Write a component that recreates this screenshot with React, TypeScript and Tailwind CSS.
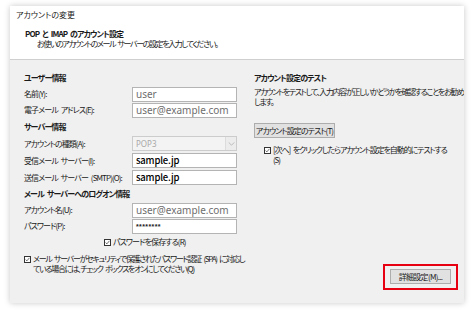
import type { ReactNode } from "react";

// Meiryo UI stand-in: CJK font with proportional kana, tightened per text
const jp = "font-['Noto_Sans_CJK_JP',sans-serif] [font-feature-settings:'palt'] [word-spacing:2px] text-[8px] text-[#1a1a1a]";

function Check() {
  return (
    <span className="flex h-[7px] w-[7px] shrink-0 items-center justify-center border border-[#333] bg-white">
      <svg viewBox="0 0 7 7" className="h-[5px] w-[5px]">
        <path d="M0.8 3.6 L2.7 5.4 L6.2 1.2" fill="none" stroke="#222" strokeWidth="0.9" />
      </svg>
    </span>
  );
}

function Heading({ children }: { children: ReactNode }) {
  return <div className={`${jp} flex h-[17px] items-center font-bold tracking-[-0.9px]`}>{children}</div>;
}

function Row({ label, h = "h-[16px]", children }: { label: string; h?: string; children: ReactNode }) {
  return (
    <div className={`flex ${h} items-center`}>
      <div className={`${jp} w-[108px] whitespace-nowrap tracking-[-0.9px]`}>{label}</div>
      {children}
    </div>
  );
}

function TextBox({ value, dark = false }: { value: string; dark?: boolean }) {
  return (
    <div className="flex h-[15px] w-[105px] items-center border border-[#b4b4b4] bg-white pl-[3px]">
      {dark ? (
        <span className="font-['Noto_Sans_CJK_JP',sans-serif] text-[9.5px] font-medium leading-none tracking-[-0.2px] text-black">{value}</span>
      ) : (
        <span className="font-['Noto_Sans',sans-serif] text-[10px] leading-none text-[#6e6e6e]">{value}</span>
      )}
    </div>
  );
}

export default function App() {
  return (
    <div className="h-[311px] w-[474px] overflow-hidden bg-white pl-[10px] pt-[6px]">
      <div className="flex h-[297px] w-[454px] flex-col overflow-hidden bg-[#f0f0f0] shadow-[0_0_6px_rgba(0,0,0,0.22)]">
        {/* header */}
        <div className="h-[54px] shrink-0 border-b border-[#cfcfcf] bg-white pl-[6px] pt-[4px]">
          <div className={`${jp} leading-[10px] tracking-[0px]`}>アカウントの変更</div>
          <div className="pl-[9px] pt-[9px]">
            <div className={`${jp} font-bold leading-[10px] tracking-[-0.9px]`}>POP と IMAP のアカウント設定</div>
            <div className={`${jp} pl-[12px] leading-[9px] tracking-[-1.4px]`}>お使いのアカウントのメール サーバーの設定を入力してください。</div>
          </div>
        </div>

        {/* body */}
        <div className="flex flex-1 pt-[9px]">
          <div className="w-[230px] shrink-0 pl-[14px]">
            <Heading>ユーザー情報</Heading>
            <Row label="名前(Y):">
              <TextBox value="user" />
            </Row>
            <Row label="電子メール アドレス(E):">
              <TextBox value="user@example.com" />
            </Row>
            <Heading>サーバー情報</Heading>
            <Row label="アカウントの種類(A):" h="h-[17px]">
              <div className="flex h-[15px] w-[105px] items-center border border-[#cccccc] bg-[#f3f3f3]">
                <span className="flex-1 pl-[3px] font-['Noto_Sans',sans-serif] text-[8px] leading-none text-[#a8a8a8]">POP3</span>
                <span className="flex h-full w-[11px] items-center justify-center border-l border-[#dcdcdc] bg-[#ececec]">
                  <svg viewBox="0 0 8 5" className="h-[4px] w-[7px]">
                    <path d="M0.5 0.5 L4 4 L7.5 0.5" fill="none" stroke="#b0b0b0" strokeWidth="1" />
                  </svg>
                </span>
              </div>
            </Row>
            <Row label="受信メール サーバー(I):" h="h-[17px]">
              <TextBox value="sample.jp" dark />
            </Row>
            <Row label="送信メール サーバー (SMTP)(O):" h="h-[17px]">
              <TextBox value="sample.jp" dark />
            </Row>
            <div className={`${jp} flex h-[16px] items-center font-bold tracking-[-0.9px]`}>メール サーバーへのログオン情報</div>
            <Row label="アカウント名(U):">
              <TextBox value="user@example.com" />
            </Row>
            <Row label="パスワード(P):">
              <div className="flex h-[15px] w-[105px] items-center border border-[#b4b4b4] bg-white pl-[3px]">
                <span className="font-['Liberation_Sans',sans-serif] text-[7px] font-bold leading-none tracking-[0.4px] text-[#222]">********</span>
              </div>
            </Row>
            <div className="flex h-[16px] items-center gap-[2px] pl-[80px]">
              <Check />
              <span className={`${jp} tracking-[-0.9px]`}>パスワードを保存する(R)</span>
            </div>
            <div className="mt-[4px] flex gap-[2px]">
              <div className="pt-[2px]">
                <Check />
              </div>
              <div className={`${jp} leading-[10px] tracking-[-1.3px]`}>
                <div className="whitespace-nowrap">メール サーバーがセキュリティで保護されたパスワード認証 (SPA) に対応し</div>
                <div className="whitespace-nowrap">ている場合には、チェック ボックスをオンにしてください(Q)</div>
              </div>
            </div>
          </div>

          <div className="flex min-w-0 flex-1 flex-col pl-[14px]">
            <Heading>アカウント設定のテスト</Heading>
            <div className={`${jp} mt-[1px] leading-[10px] tracking-[-1.3px]`}>
              <div className="whitespace-nowrap">アカウントをテストして、入力内容が正しいかどうかを確認することをお勧め</div>
              <div>します。</div>
            </div>
            <div className="mt-[16px] flex">
              <button className={`${jp} block h-[15px] w-[81px] whitespace-nowrap border border-[#adadad] bg-[#e1e1e1] leading-none tracking-[-0.9px]`}>
                アカウント設定のテスト(T)
              </button>
            </div>
            <div className="mt-[7px] flex gap-[2px] pl-[10px]">
              <div className="pt-[2px]">
                <Check />
              </div>
              <div className={`${jp} leading-[10px] tracking-[-1.1px]`}>
                <div className="whitespace-nowrap">[次へ] をクリックしたらアカウント設定を自動的にテストする</div>
                <div>(S)</div>
              </div>
            </div>
            <div className="mt-auto mb-[13px] mr-[6px] self-end border-2 border-[#e60012] pb-[4px] pl-[5px] pr-[5px] pt-[3px]">
              <button className={`${jp} block h-[15px] w-[61px] whitespace-nowrap border border-[#adadad] bg-[#e1e1e1] leading-none tracking-[-0.7px]`}>
                詳細設定(M)...
              </button>
            </div>
          </div>
        </div>
      </div>
    </div>
  );
}
